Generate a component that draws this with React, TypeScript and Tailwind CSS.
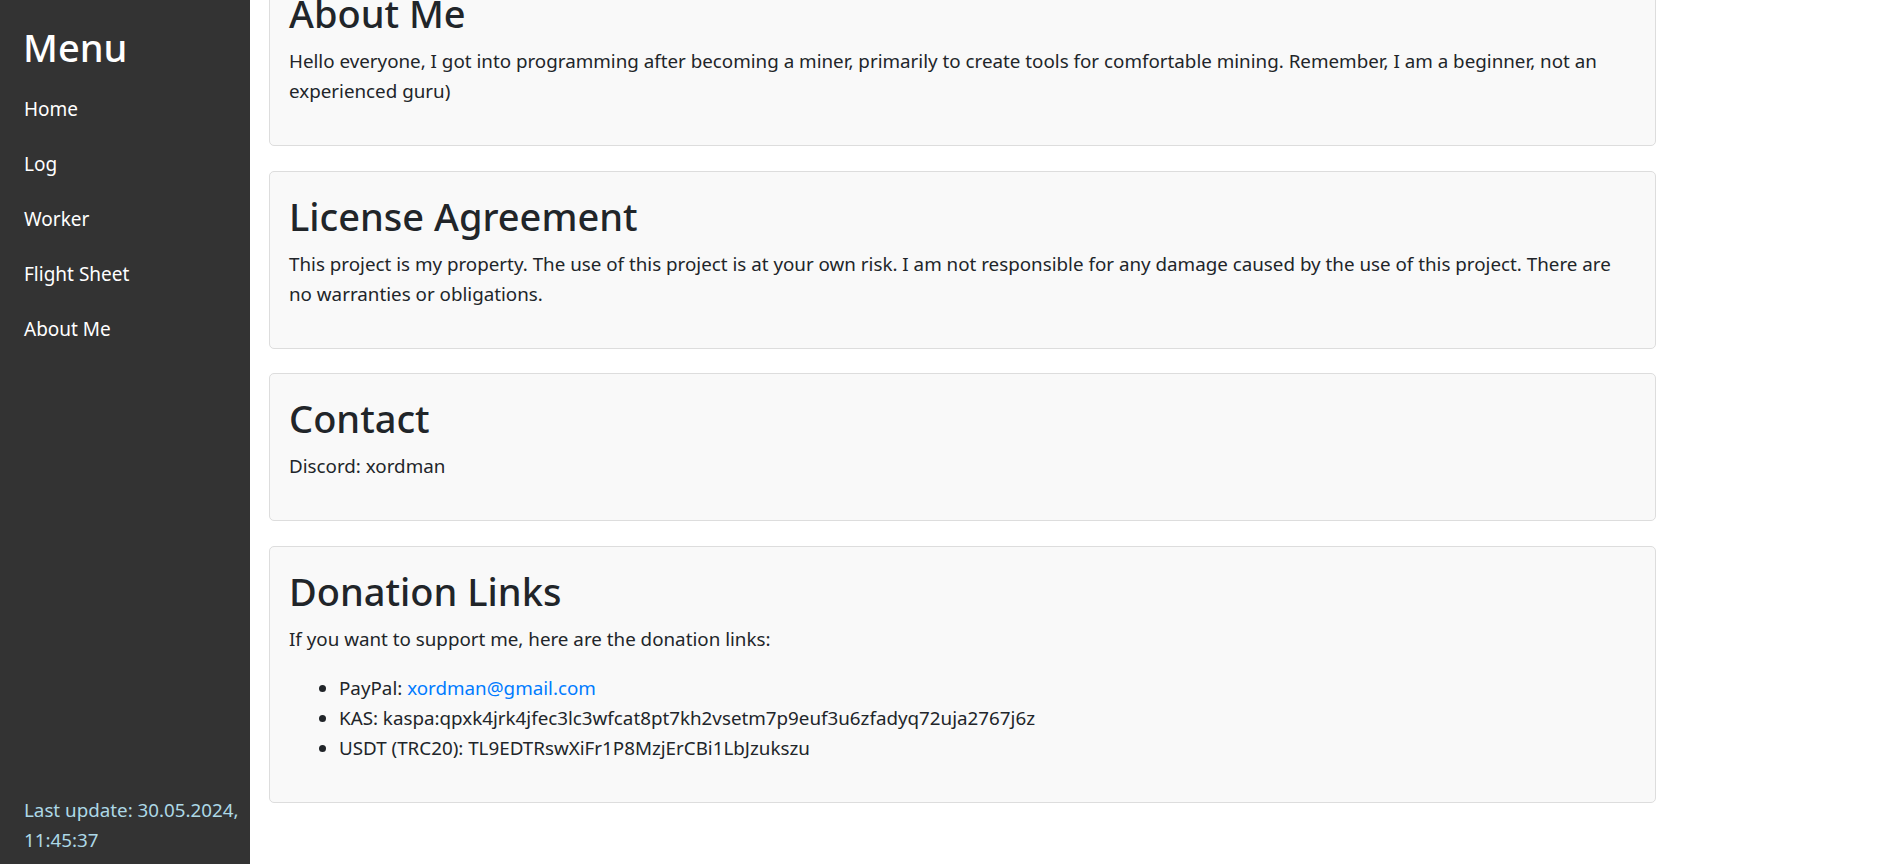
const NAV = ['Home', 'Log', 'Worker', 'Flight Sheet', 'About Me'];

const font = { fontFamily: '"Noto Sans", "Open Sans", sans-serif' };

function Card({ title, children }: { title: string; children: React.ReactNode }) {
  return (
    <section className="ml-[19px] mb-[24.5px] w-[1387px] rounded-[5px] border border-[#dddddd] bg-[#f9f9f9] px-[19px] pt-[20px] pb-[20px]">
      <h1 className="mb-[9px] text-[38px] leading-[48px] font-medium text-[#212529]">{title}</h1>
      {children}
    </section>
  );
}

export default function App() {
  return (
    <div className="flex h-screen overflow-hidden bg-white text-[18.8px] leading-[30px] text-[#212529]" style={font}>
      {/* Sidebar */}
      <aside className="flex h-full w-[250px] shrink-0 flex-col justify-between bg-[#333333] pt-[23px] pb-[9px] text-white">
        <div className="px-[24px]">
          <h2 className="mb-[10px] -ml-[1px] text-[38px] leading-[48px] font-medium">Menu</h2>
          <nav>
            {NAV.map((item) => (
              <a key={item} href="#" className="block py-[12.5px] text-[19px] text-white">{item}</a>
            ))}
          </nav>
        </div>
        <p className="pl-[24px] pr-[2px] text-[#add8e6]">Last update: 30.05.2024, 11:45:37</p>
      </aside>

      {/* Content (scrolled) */}
      <main className="h-full flex-1 overflow-hidden">
        <div className="-mt-[32px]">
          <Card title="About Me">
            <p className="mb-[19px]">Hello everyone, I got into programming after becoming a miner, primarily to create tools for comfortable mining. Remember, I am a beginner, not an experienced guru)</p>
          </Card>
          <Card title="License Agreement">
            <p className="mb-[19px]">This project is my property. The use of this project is at your own risk. I am not responsible for any damage caused by the use of this project. There are no warranties or obligations.</p>
          </Card>
          <Card title="Contact">
            <p className="mb-[19px]">Discord: xordman</p>
          </Card>
          <Card title="Donation Links">
            <p className="mb-[19px]">If you want to support me, here are the donation links:</p>
            <ul className="mb-[19px] list-disc pl-[50px]">
              <li>PayPal: <a href="#" className="text-[#007bff]">xordman@gmail.com</a></li>
              <li>KAS: kaspa:qpxk4jrk4jfec3lc3wfcat8pt7kh2vsetm7p9euf3u6zfadyq72uja2767j6z</li>
              <li>USDT (TRC20): TL9EDTRswXiFr1P8MzjErCBi1LbJzukszu</li>
            </ul>
          </Card>
        </div>
      </main>
    </div>
  );
}
